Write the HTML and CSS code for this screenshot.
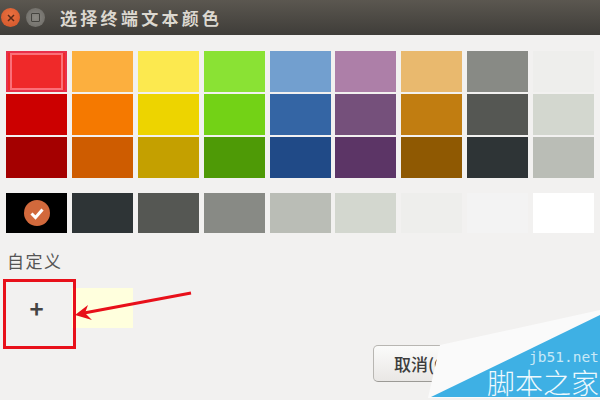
FILE: index.html
```html
<!DOCTYPE html>
<html lang="zh-CN">
<head>
  <meta charset="UTF-8" />
  <title>选择终端文本颜色</title>
  <link rel="stylesheet" href="styles.css">
</head>
<body>

  <div class="dialog">
    <!-- Title bar -->
    <header class="titlebar">
      <div class="win-btn win-close">
        <svg width="10" height="10" viewBox="0 0 10 10"><path d="M2 2l6 6M8 2l-6 6" stroke="#5a2a18" stroke-width="1.5" fill="none"/></svg>
      </div>
      <div class="win-btn win-max"><span class="max-glyph"></span></div>
      <h1 class="title">选择终端文本颜色</h1>
    </header>

    <!-- Palette -->
    <section class="palette">
      <div class="swatch scarlet-1 selected"></div>
      <div class="swatch orange-1"></div>
      <div class="swatch butter-1"></div>
      <div class="swatch cham-1"></div>
      <div class="swatch sky-1"></div>
      <div class="swatch plum-1"></div>
      <div class="swatch choc-1"></div>
      <div class="swatch alum-4"></div>
      <div class="swatch alum-1"></div>

      <div class="swatch scarlet-2"></div>
      <div class="swatch orange-2"></div>
      <div class="swatch butter-2"></div>
      <div class="swatch cham-2"></div>
      <div class="swatch sky-2"></div>
      <div class="swatch plum-2"></div>
      <div class="swatch choc-2"></div>
      <div class="swatch alum-5"></div>
      <div class="swatch alum-2"></div>

      <div class="swatch scarlet-3"></div>
      <div class="swatch orange-3"></div>
      <div class="swatch butter-3"></div>
      <div class="swatch cham-3"></div>
      <div class="swatch sky-3"></div>
      <div class="swatch plum-3"></div>
      <div class="swatch choc-3"></div>
      <div class="swatch alum-6"></div>
      <div class="swatch alum-3"></div>
    </section>

    <section class="palette greys">
      <div class="swatch black checked">
        <svg width="26" height="26" viewBox="0 0 26 26"><circle cx="13" cy="13" r="13" fill="#d2693c"/><path d="M7.5 13.5l4 4 7-8" stroke="#fff" stroke-width="3" fill="none"/></svg>
      </div>
      <div class="swatch alum-6"></div>
      <div class="swatch alum-5"></div>
      <div class="swatch alum-4"></div>
      <div class="swatch alum-3"></div>
      <div class="swatch alum-2"></div>
      <div class="swatch alum-1"></div>
      <div class="swatch off-white"></div>
      <div class="swatch white"></div>
    </section>

    <!-- Custom colours -->
    <div class="custom-label">自定义</div>
    <div class="palette custom">
      <div class="swatch add-btn">+</div>
      <div class="swatch pale-yellow"></div>
    </div>

    <div class="actions">
      <button class="btn">取消(C)</button>
    </div>

    <!-- Annotation on top of the screenshot -->
    <div class="mark-box"></div>
    <svg class="mark-arrow" width="120" height="50" viewBox="0 0 120 50">
      <path d="M119 3L12 23" stroke="#e8101a" stroke-width="3" fill="none"/>
      <path d="M3 25L16 15L13 23L20 30Z" fill="#e8101a"/>
    </svg>

    <!-- Watermark -->
    <div class="watermark">
      <svg class="wm-shape" width="176" height="92" viewBox="0 0 176 92">
        <path d="M4 90L16 37L176 2V90Z" fill="#fafafa"/>
        <path d="M7 89L176 7V89Z" fill="#3eb0e4"/>
      </svg>
      <span class="wm-site">jb51.net</span>
      <span class="wm-name">脚本之家</span>
    </div>
  </div>

</body>
</html>
```

FILE: styles.css
```css
* { margin: 0; padding: 0; box-sizing: border-box; }
html, body { width: 600px; height: 400px; overflow: hidden; }
body {
  font-family: 'Noto Sans CJK SC', 'Noto Sans', sans-serif;
  background-color: #f2f1f0;
  color: #4c4c4c;
}

.dialog {
  position: relative;
  width: 600px;
  height: 400px;
  overflow: hidden;
  display: flex;
  flex-direction: column;
}

/* --- title bar --- */
.titlebar {
  height: 35px;
  flex-shrink: 0;
  display: flex;
  align-items: center;
  padding-left: 1px;
  background: linear-gradient(#5b5750, #3f3d39);
}
.win-btn {
  width: 19px;
  height: 19px;
  border-radius: 50%;
  display: flex;
  align-items: center;
  justify-content: center;
}
.win-close { background: radial-gradient(circle at 50% 35%, #e9703f, #d2552a); }
.win-max {
  margin-left: 6px;
  background: radial-gradient(circle, #8b8983, #6a6863);
}
.max-glyph {
  width: 9px;
  height: 9px;
  border: 1.5px solid #45443f;
  border-radius: 1px;
}
.title {
  margin-left: 15px;
  font-size: 17px;
  font-weight: 700;
  letter-spacing: 3.3px;
  color: #dcd8d0;
}

/* --- palette --- */
.palette {
  display: grid;
  grid-template-columns: repeat(9, 61px);
  column-gap: 4.875px;
  row-gap: 2.5px;
  padding-left: 6px;
}
.palette:first-of-type { margin-top: 16px; }
.swatch { height: 40.5px; }
.greys { margin-top: 15px; }
.greys .swatch { height: 40px; }

.selected {
  position: relative;
  border: 2px solid #e8304a;
}
.selected::after {
  content: "";
  position: absolute;
  top: 0; bottom: 0;
  left: 2px; right: 2px;
  border: 2px solid #fb7078;
}
.checked { display: flex; align-items: center; justify-content: center; }

.scarlet-1 { background-color: #ef2929; }
.scarlet-2 { background-color: #cc0000; }
.scarlet-3 { background-color: #a40000; }
.orange-1 { background-color: #fcaf3e; }
.orange-2 { background-color: #f57900; }
.orange-3 { background-color: #ce5c00; }
.butter-1 { background-color: #fce94f; }
.butter-2 { background-color: #edd400; }
.butter-3 { background-color: #c4a000; }
.cham-1 { background-color: #8ae234; }
.cham-2 { background-color: #73d216; }
.cham-3 { background-color: #4e9a06; }
.sky-1 { background-color: #729fcf; }
.sky-2 { background-color: #3465a4; }
.sky-3 { background-color: #204a87; }
.plum-1 { background-color: #ad7fa8; }
.plum-2 { background-color: #75507b; }
.plum-3 { background-color: #5c3566; }
.choc-1 { background-color: #e9b96e; }
.choc-2 { background-color: #c17d11; }
.choc-3 { background-color: #8f5902; }
.alum-1 { background-color: #eeeeec; }
.alum-2 { background-color: #d3d7cf; }
.alum-3 { background-color: #babdb6; }
.alum-4 { background-color: #888a85; }
.alum-5 { background-color: #555753; }
.alum-6 { background-color: #2e3436; }
.black { background-color: #000; }
.off-white { background-color: #f3f3f3; }
.white { background-color: #fff; }
.pale-yellow { background-color: #ffffdd; }

/* --- custom colours --- */
.custom-label {
  margin: 16px 0 0 7px;
  font-size: 17px;
  line-height: 24px;
  letter-spacing: 1.5px;
  color: #555;
}
.custom { margin-top: 15px; }
.add-btn {
  display: flex;
  align-items: center;
  justify-content: center;
  font-size: 24px;
  font-weight: 700;
  line-height: 1;
  color: #444;
}

/* --- button row --- */
.actions { margin: 17px 0 0 373px; }
.btn {
  width: 120px;
  height: 37px;
  padding-left: 20px;
  text-align: left;
  font-family: inherit;
  font-size: 17px;
  font-weight: 500;
  color: #3c3c3c;
  background: linear-gradient(#fbfbfa, #e9e7e5);
  border: 1px solid #b8b6b2;
  border-bottom-color: #9c9a96;
  border-radius: 5px;
}

/* --- annotation --- */
.mark-box {
  position: absolute;
  left: 3px;
  top: 279px;
  width: 73px;
  height: 70px;
  border: 3px solid #e8101a;
}
.mark-arrow {
  position: absolute;
  left: 72px;
  top: 290px;
}

/* --- watermark --- */
.watermark {
  position: absolute;
  left: 424px;
  top: 308px;
  width: 176px;
  height: 92px;
}
.wm-shape { display: block; }
.wm-site {
  position: absolute;
  left: 105px;
  top: 42px;
  font-family: 'DejaVu Sans Mono', monospace;
  font-size: 14.5px;
  line-height: 14px;
  white-space: nowrap;
  color: #c8e9f7;
}
.wm-name {
  position: absolute;
  left: 63px;
  top: 60px;
  font-size: 28px;
  font-weight: 300;
  line-height: 29px;
  white-space: nowrap;
  color: #eef9fd;
}
```
